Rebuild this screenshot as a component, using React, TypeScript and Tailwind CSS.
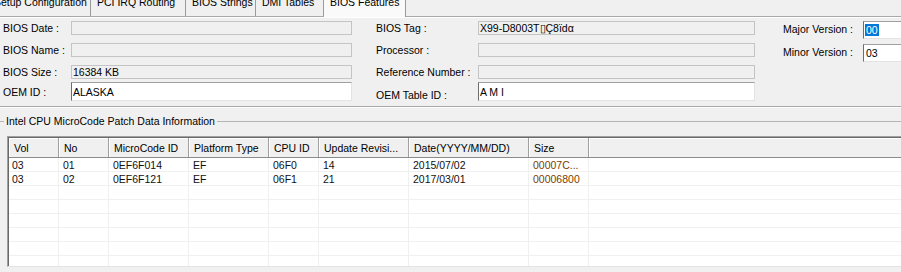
import React from "react";

const tabs = [
  { label: "Setup Configuration", w: "w-[103px] -ml-[12px]", active: false },
  { label: "PCI IRQ Routing", w: "w-[95px]", active: false },
  { label: "BIOS Strings", w: "w-[70px]", active: false },
  { label: "DMI Tables", w: "w-[68px]", active: false },
  { label: "BIOS Features", w: "w-[82px]", active: true },
];

const columns = [
  { title: "Vol", w: "w-[50px]" },
  { title: "No", w: "w-[50px]" },
  { title: "MicroCode ID", w: "w-[80px]" },
  { title: "Platform Type", w: "w-[80px]" },
  { title: "CPU ID", w: "w-[50px]" },
  { title: "Update Revisi...", w: "w-[90px]" },
  { title: "Date(YYYY/MM/DD)", w: "w-[120px]" },
  { title: "Size", w: "w-[60px]" },
];

const rows = [
  ["03", "01", "0EF6F014", "EF", "06F0", "14", "2015/07/02", "00007C..."],
  ["03", "02", "0EF6F121", "EF", "06F1", "21", "2017/03/01", "00006800"],
  ["", "", "", "", "", "", "", ""],
  ["", "", "", "", "", "", "", ""],
  ["", "", "", "", "", "", "", ""],
  ["", "", "", "", "", "", "", ""],
  ["", "", "", "", "", "", "", ""],
  ["", "", "", "", "", "", "", ""],
];

// read-only text box (grey)
const ReadBox: React.FC<{ w: string; value?: string }> = ({ w, value }) => (
  <div className={`${w} h-[14px] border border-[#c4c4c4] bg-[#f0f0f0] flex items-center pl-[1px] whitespace-nowrap overflow-hidden`}>
    {value}
  </div>
);

// editable sunken text box (white)
const EditBox: React.FC<{ w: string; h: string; children?: React.ReactNode }> = ({ w, h, children }) => (
  <div
    className={`${w} ${h} bg-white border border-t-[#a0a0a0] border-l-[#6d6d6d] border-r-[#e3e3e3] border-b-[#e3e3e3] flex items-center pl-[1px] whitespace-nowrap overflow-hidden`}
  >
    {children}
  </div>
);

const App: React.FC = () => {
  return (
    <div className="w-[901px] h-[272px] overflow-hidden bg-[#f0f0f0] text-black text-[10.5px] leading-[12px] font-['Liberation_Sans',Arial,sans-serif]">
      {/* Tab strip */}
      <div className="flex h-[20px] -mt-[4px]">
        {tabs.map((t) => (
          <div
            key={t.label}
            className={`${t.w} shrink-0 pl-[6px] whitespace-nowrap border-r border-r-[#9a9a9a] ${
              t.active ? "bg-[#fafafa] h-[21px]" : "bg-[#f0f0f0] h-[20px]"
            }`}
          >
            {t.label}
          </div>
        ))}
      </div>
      <div className="border-t border-t-[#a9a9a9]" />
      <div className="border-t border-t-white" />

      {/* BIOS fields */}
      <div className="flex pt-[3px]">
        <div className="flex flex-col pl-[3px]">
          <div className="flex items-center h-[14px]">
            <span className="w-[68px]">BIOS Date :</span>
            <ReadBox w="w-[281px]" />
          </div>
          <div className="flex items-center h-[14px] mt-[8px]">
            <span className="w-[68px]">BIOS Name :</span>
            <ReadBox w="w-[281px]" />
          </div>
          <div className="flex items-center h-[14px] mt-[8px]">
            <span className="w-[68px]">BIOS Size :</span>
            <ReadBox w="w-[281px]" value="16384 KB" />
          </div>
          <div className="flex items-center h-[19px] mt-[3px]">
            <span className="w-[68px]">OEM ID :</span>
            <EditBox w="w-[281px]" h="h-[19px]">ALASKA</EditBox>
          </div>
        </div>

        <div className="flex flex-col ml-[24px]">
          <div className="flex items-center h-[14px]">
            <span className="w-[102px]">BIOS Tag :</span>
            <ReadBox w="w-[277px]" value="X99-D8003T▯Ç8ïdα" />
          </div>
          <div className="flex items-center h-[14px] mt-[8px]">
            <span className="w-[102px]">Processor :</span>
            <ReadBox w="w-[277px]" />
          </div>
          <div className="flex items-center h-[14px] mt-[8px]">
            <span className="w-[102px] whitespace-nowrap">Reference Number :</span>
            <ReadBox w="w-[277px]" />
          </div>
          <div className="flex items-center h-[19px] mt-[3px]">
            <span className="w-[102px] pt-[6px]">OEM Table ID :</span>
            <EditBox w="w-[277px]" h="h-[19px]">A M I</EditBox>
          </div>
        </div>

        <div className="flex flex-col ml-[28px]">
          <div className="flex items-center h-[18px]">
            <span className="w-[80px] pb-[3px] whitespace-nowrap">Major Version :</span>
            <EditBox w="w-[60px]" h="h-[18px]">
              <span className="bg-[#0078d7] text-white px-[1px]">00</span>
            </EditBox>
          </div>
          <div className="flex items-center h-[18px] mt-[5px]">
            <span className="w-[80px] pb-[3px] whitespace-nowrap">Minor Version :</span>
            <EditBox w="w-[60px]" h="h-[18px]">
              <span className="px-[1px]">03</span>
            </EditBox>
          </div>
        </div>
      </div>

      {/* separator */}
      <div className="mt-[5px] border-t border-t-[#a9a9a9]" />
      <div className="border-t border-t-white" />

      {/* group box header */}
      <div className="flex items-center h-[14px] mt-[6px]">
        <div className="w-[4px] border-t border-t-[#b4b4b4]" />
        <span className="px-[2px] whitespace-nowrap">Intel CPU MicroCode Patch Data Information</span>
        <div className="flex-1 border-t border-t-[#b4b4b4]" />
      </div>

      {/* list view */}
      <div className="ml-[7px] mt-[8px] w-[894px] border-t border-l border-[#a0a0a0] border-b border-b-[#e3e3e3]">
        <div className="border-t border-l border-[#696969] bg-white">
          <div className="flex h-[20px] bg-[#f0f0f0] border-b border-b-[#8c8c8c]">
            {columns.map((c) => (
              <div
                key={c.title}
                className={`${c.w} shrink-0 h-full flex items-center pl-[5px] whitespace-nowrap overflow-hidden border-r border-r-[#a0a0a0] shadow-[inset_1px_1px_0_#ffffff]`}
              >
                {c.title}
              </div>
            ))}
            <div className="flex-1 h-full shadow-[inset_1px_1px_0_#ffffff]" />
          </div>
          <div className="h-[108px] overflow-hidden">
            {rows.map((r, i) => (
              <div key={i} className="flex h-[14px] border-b border-b-[#f0f0f0]">
                {r.map((cell, j) => (
                  <div
                    key={j}
                    className={`${columns[j].w} shrink-0 h-full flex items-center whitespace-nowrap overflow-hidden border-r border-r-[#f0f0f0] ${
                      j === 0 ? "pl-[3px]" : "pl-[4px]"
                    } ${j === 7 ? "text-[#7a3c00]" : "text-[#111111]"}`}
                  >
                    {cell}
                  </div>
                ))}
                <div className="flex-1" />
              </div>
            ))}
          </div>
        </div>
      </div>
    </div>
  );
};

export default App;
